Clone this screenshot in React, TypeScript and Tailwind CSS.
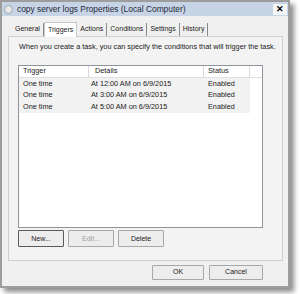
import React from "react";

const font = { fontFamily: '"Liberation Sans", Arial, sans-serif' };

function Btn({ label, w, h, def, disabled }: { label: string; w: string; h: string; def?: boolean; disabled?: boolean }) {
  return (
    <div
      className={`${w} ${h} flex items-center justify-center text-[7px] bg-[#ededed] border ${
        def ? "border-[#5a5a5a]" : "border-[#a8a8a8]"
      } ${disabled ? "text-[#a0a0a0]" : "text-[#1a1a1a]"} rounded-[1px]`}
    >
      {label}
    </div>
  );
}

export default function App() {
  const rows = [
    ["One time", "At 12:00 AM on 6/9/2015", "Enabled"],
    ["One time", "At 3:00 AM on 6/9/2015", "Enabled"],
    ["One time", "At 5:00 AM on 6/9/2015", "Enabled"],
  ];
  const tabs = ["General", "Triggers", "Actions", "Conditions", "Settings", "History"];
  return (
    <div className="w-[300px] h-[294px] bg-white" style={font}>
      <div className="w-[290px] h-[288px] border-[2px] border-[#9d9d9d] bg-[#f0f0f0] shadow-[4px_4px_5px_rgba(0,0,0,0.45)] flex flex-col">
        {/* title bar */}
        <div className="h-[14px] bg-[#c7d4e6] flex items-center pl-[2px] pr-[1px]">
          <div className="w-[9px] h-[9px] rounded-full bg-[#e8e8e8] border border-[#9aa6b4] mr-[4px]" />
          <span className="text-[8.4px] text-[#1e2a3a] leading-none">copy server logs Properties (Local Computer)</span>
          <div className="ml-auto w-[14px] h-[11px] bg-[#f4f6f8] flex items-center justify-center text-[9px] font-bold leading-none text-black">
            ✕
          </div>
        </div>
        {/* body */}
        <div className="flex-1 px-[6px] pt-[6px] flex flex-col">
          <div className="flex items-end h-[14px] pl-[4px]">
            {tabs.map((t, i) => (
              <div
                key={t}
                className={`h-[13px] flex items-center px-[3px] text-[7px] text-[#1a1a1a] ${
                  i === 1 ? "bg-white h-[15px] border-t border-x border-[#c8c8c8] -mb-[1px] relative z-10" : "border-r border-[#8a8a8a]"
                }`}
              >
                {t}
              </div>
            ))}
          </div>
          <div className="h-[225px] w-[275px] border border-[#cfcfcf] bg-[#f3f3f3] pl-[9px] pt-[6px]">
            <div className="text-[7.3px] text-[#1a1a1a] leading-none pl-[1px]">
              When you create a task, you can specify the conditions that will trigger the task.
            </div>
            <div className="mt-[15px] w-[245px] h-[163px] border border-[#8e949c] bg-white flex flex-col">
              <div className="h-[12px] flex text-[7.3px] text-[#1a1a1a] border-b border-[#e0e0e0]">
                <div className="w-[70px] border-r border-[#d8d8d8] pl-[4px] flex items-center">Trigger</div>
                <div className="w-[115px] border-r border-[#d8d8d8] pl-[6px] flex items-center">Details</div>
                <div className="w-[46px] border-r border-[#d8d8d8] pl-[4px] flex items-center">Status</div>
                <div className="flex-1" />
              </div>
              {rows.map((r, i) => (
                <div key={i} className="h-[11.5px] flex text-[7.3px] text-[#1a1a1a] w-[231px] bg-[#f2f2f2]">
                  <div className="w-[70px] pl-[4px] flex items-center">{r[0]}</div>
                  <div className="w-[115px] pl-[2px] flex items-center">{r[1]}</div>
                  <div className="w-[46px] pl-[4px] flex items-center">{r[2]}</div>
                </div>
              ))}
            </div>
            <div className="flex gap-[4px] mt-[2px]">
              <Btn label="New..." w="w-[46px]" h="h-[17px]" def />
              <Btn label="Edit..." w="w-[46px]" h="h-[17px]" disabled />
              <Btn label="Delete" w="w-[46px]" h="h-[17px]" />
            </div>
          </div>
          <div className="flex justify-start gap-[5px] pl-[144px] mt-[4px]">
            <Btn label="OK" w="w-[52px]" h="h-[15px]" />
            <Btn label="Cancel" w="w-[54px]" h="h-[15px]" />
          </div>
        </div>
      </div>
    </div>
  );
}
